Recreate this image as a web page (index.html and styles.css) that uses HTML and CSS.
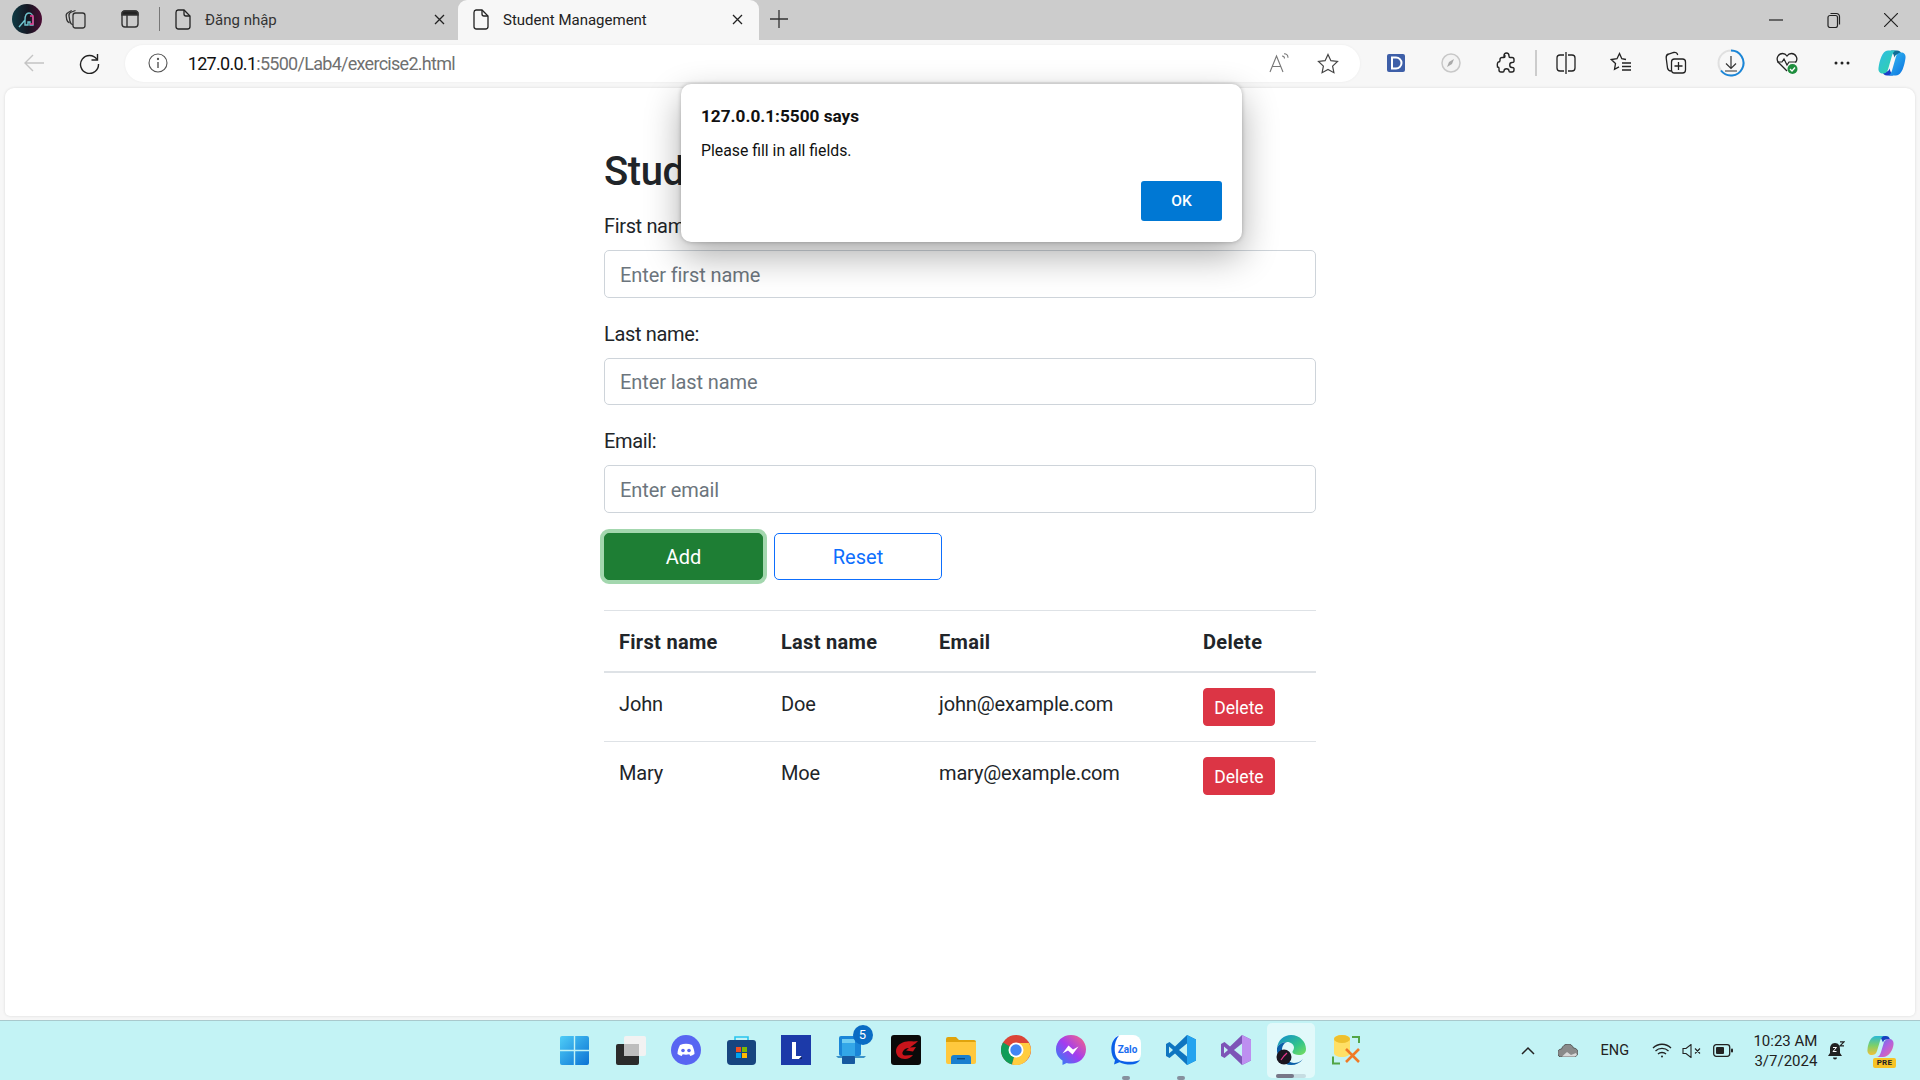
FILE: index.html
```html
<!DOCTYPE html>
<html lang="en">
<head>
<meta charset="utf-8">
<title>Student Management</title>
<link rel="stylesheet" href="styles.css">
</head>
<body>
<div class="browser">
  <header class="tabbar">
    <div class="profile">
      <svg width="30" height="30" viewBox="0 0 30 30"><defs><linearGradient id="pg" x1="0" x2="1" y1="0" y2="0"><stop offset="0" stop-color="#0e3a44"/><stop offset=".55" stop-color="#161622"/><stop offset="1" stop-color="#4c0c34"/></linearGradient></defs><circle cx="15" cy="15" r="15" fill="url(#pg)"/><path d="M7 23l6-7M13 16c0-5 2-7 4-7s4 2 4 5v7h-3v-3h-2v3h-3z" fill="none" stroke="#6fc4cf" stroke-width="1.4"/><path d="M18 12h3v8h-3" fill="none" stroke="#e8358c" stroke-width="1.4"/></svg>
    </div>
    <div class="tbtn tbtn-first">
      <svg width="22" height="22" viewBox="0 0 22 22" fill="none" stroke="#333" stroke-width="1.3"><rect x="8" y="5" width="12" height="15" rx="2.5"/><path d="M8 17c-1.5-.5-2.6-1.7-3-3.5L4 8c-.3-2 .6-3.300 2.500-4l4-1.500"/><path d="M4.500 15c-1.500-.8-2.500-2-2.800-3.500L1.200 8c-.2-1.500.5-2.800 2-3.500l3.500-2"/></svg>
    </div>
    <div class="tbtn">
      <svg width="20" height="20" viewBox="0 0 20 20" fill="none" stroke="#333" stroke-width="1.4"><rect x="2" y="2" width="16" height="16" rx="3"/><path d="M2 5a3 3 0 0 1 3-3h10a3 3 0 0 1 3 3v1H2z" fill="#222"/><path d="M7 6v12"/></svg>
    </div>
    <div class="tabsep"></div>
    <div class="tab">
      <svg class="doc" width="16" height="21" viewBox="0 0 16 21" fill="none" stroke="#222" stroke-width="1.3"><path d="M3 1h6l6 6v10.500a2.500 2.500 0 0 1-2.500 2.500h-9A2.500 2.500 0 0 1 1 17.500v-14A2.500 2.500 0 0 1 3 1z"/><path d="M9 1v4a2 2 0 0 0 2 2h4"/></svg>
      <span class="tabtitle">Đăng nhập</span>
      <svg class="tabx" width="11" height="11" viewBox="0 0 11 11" stroke="#222" stroke-width="1.3"><path d="M1 1l9 9M10 1l-9 9"/></svg>
    </div>
    <div class="tab tab-active">
      <svg class="doc" width="16" height="21" viewBox="0 0 16 21" fill="none" stroke="#222" stroke-width="1.3"><path d="M3 1h6l6 6v10.500a2.500 2.500 0 0 1-2.500 2.500h-9A2.500 2.500 0 0 1 1 17.500v-14A2.500 2.500 0 0 1 3 1z"/><path d="M9 1v4a2 2 0 0 0 2 2h4"/></svg>
      <span class="tabtitle">Student Management</span>
      <svg class="tabx" width="11" height="11" viewBox="0 0 11 11" stroke="#222" stroke-width="1.3"><path d="M1 1l9 9M10 1l-9 9"/></svg>
    </div>
    <div class="newtab">
      <svg width="18" height="18" viewBox="0 0 18 18" stroke="#333" stroke-width="1.3"><path d="M9 0v18M0 9h18"/></svg>
    </div>
    <div class="winctl">
      <div class="winbtn"><svg width="14" height="14" viewBox="0 0 14 14" stroke="#222" stroke-width="1.2"><path d="M0 7h14"/></svg></div>
      <div class="winbtn"><svg width="14" height="16" viewBox="0 0 14 16" fill="none" stroke="#222" stroke-width="1.2"><rect x="1" y="3.500" width="9.500" height="12" rx="2"/><path d="M3.500 1.500h6a3 3 0 0 1 3 3v8"/></svg></div>
      <div class="winbtn"><svg width="14" height="14" viewBox="0 0 14 14" stroke="#222" stroke-width="1.2"><path d="M0 0l14 14M14 0L0 14"/></svg></div>
    </div>
  </header>

  <nav class="toolbar">
    <div class="navbtn nav-back"><svg width="20" height="18" viewBox="0 0 20 18" fill="none" stroke="#c4c4c4" stroke-width="1.4"><path d="M1 9h19M9 1L1 9l8 8"/></svg></div>
    <div class="navbtn nav-reload"><svg width="21" height="21" viewBox="0 0 21 21" fill="none" stroke="#222" stroke-width="1.4"><path d="M18 6.500A9 9 0 1 0 19.500 11"/><path d="M18.500 1v6h-6"/></svg></div>
    <div class="addr">
      <svg class="info" width="20" height="20" viewBox="0 0 20 20" fill="none" stroke="#555" stroke-width="1.1"><circle cx="10" cy="10" r="9"/><path d="M10 9v6" stroke-width="1.4"/><circle cx="10" cy="6" r=".6" fill="#555"/></svg>
      <span class="url"><span class="url-host">127.0.0.1</span>:5500/Lab4/exercise2.html</span>
      <div class="addr-end">
        <svg width="22" height="20" viewBox="0 0 22 20" fill="none" stroke="#777" stroke-width="1.1"><path d="M1 19L7.500 3 14 19M3.500 13.500h8"/><path d="M13 3c1.500 0 2.500 1 2.500 2.500M15 .8c2.500 0 4 1.500 4 4"/></svg>
        <svg width="22" height="21" viewBox="0 0 22 21" fill="none" stroke="#444" stroke-width="1.2"><path d="M11 1.500l2.900 6.200 6.600.8-4.900 4.600 1.300 6.600L11 16.400l-5.900 3.300 1.300-6.600L1.500 8.500l6.600-.8z"/></svg>
      </div>
    </div>
    <div class="tools">
      <div class="tool"><svg width="18" height="18" viewBox="0 0 18 18"><rect width="18" height="18" rx="2" fill="#3e5fa8"/><path d="M5 3.500h4a5.500 5.500 0 0 1 0 11H5z" fill="none" stroke="#fff" stroke-width="2"/></svg></div>
      <div class="tool"><svg width="20" height="20" viewBox="0 0 20 20"><circle cx="10" cy="10" r="9" fill="#f3f3f3" stroke="#c8c8c8" stroke-width="1.5"/><path d="M6 14l2-5 5-3-2 5z" fill="#aaa"/></svg></div>
      <div class="tool"><svg width="20" height="22" viewBox="0 0 20 22" fill="none" stroke="#222" stroke-width="1.4"><path d="M8 4c0-4 5-4 5 0 0 1 0 1.500 1 1.500h2a2 2 0 0 1 2 2v2c0 1-1.500 1-2 1-3 0-3 5 0 5 .5 0 2 0 2 1v1.500a2 2 0 0 1-2 2h-2c-1 0-1-.5-1-1 0-3-5-3-5 0 0 .5 0 1-1 1H5a2 2 0 0 1-2-2v-2c0-1-1-1-1.500-1-.5-3 .1-5 1-5 .5 0 1.500-.5 1.500-1.500V7.500a2 2 0 0 1 2-2h2c1 0 1-.5 1-1.500z"/></svg></div>
      <div class="toolsep"></div>
      <div class="tool"><svg width="20" height="22" viewBox="0 0 20 22" fill="none" stroke="#222" stroke-width="1.3"><path d="M10 0v22M8 3H4a3 3 0 0 0-3 3v10a3 3 0 0 0 3 3h4M12 3h4a3 3 0 0 1 3 3v10a3 3 0 0 1-3 3h-4"/></svg></div>
      <div class="tool"><svg width="22" height="22" viewBox="0 0 22 22" fill="none" stroke="#222" stroke-width="1.3"><path d="M16 7.500l-4.200-.8L9.500 1.500 7 6.700l-5.700.8 4.200 4-1 5.800 4.500-2.400"/><path d="M12 11h9M12 14.500h9M12 18h9"/></svg></div>
      <div class="tool"><svg width="22" height="24" viewBox="0 0 22 24" fill="none" stroke="#222" stroke-width="1.3"><rect x="6.500" y="8" width="14" height="14" rx="3"/><path d="M13.500 11v8M9.500 15h8"/><path d="M6 20c-2 0-3-1-3.500-3L1.200 7c-.2-2 .6-3.500 2.500-4l5-1.500c2-.5 3.500.2 4 2.500"/></svg></div>
      <div class="tool"><svg width="28" height="28" viewBox="0 0 28 28" fill="none"><circle cx="14" cy="14" r="12.500" stroke="#e0e0e0" stroke-width="2"/><path d="M14 1.500A12.500 12.500 0 1 1 4 21.500" stroke="#1a86d8" stroke-width="2"/><path d="M14 7v12M9 14.500l5 5 5-5M8 22h12" stroke="#333" stroke-width="1.2"/></svg></div>
      <div class="tool"><svg width="24" height="24" viewBox="0 0 24 24" fill="none"><path d="M12 20L3.500 11.500C.500 8 3 2.500 7.500 2.500 9.500 2.500 11 3.500 12 5c1-1.500 2.500-2.500 4.500-2.500 4.500 0 7 5.500 4 9" stroke="#222" stroke-width="1.3"/><path d="M2 11h5l2-3 3 6 2-3h7" stroke="#222" stroke-width="1.2"/><circle cx="17.500" cy="18" r="5" fill="#1e8e3e"/><path d="M15 18l2 2 3-3.500" stroke="#fff" stroke-width="1.3"/></svg></div>
      <div class="tool"><svg width="16" height="4" viewBox="0 0 16 4" fill="#222"><circle cx="2" cy="2" r="1.500"/><circle cx="8" cy="2" r="1.500"/><circle cx="14" cy="2" r="1.500"/></svg></div>
      <div class="tool tool-copilot"><svg width="30" height="30" viewBox="0 0 30 30"><defs><linearGradient id="cp1" x1="0" x2="1" y1="0" y2="1"><stop offset="0" stop-color="#2fbce6"/><stop offset="1" stop-color="#2fd6a0"/></linearGradient><linearGradient id="cp2" x1="0" x2="1" y1="0" y2="1"><stop offset="0" stop-color="#38c4f2"/><stop offset="1" stop-color="#0a6fe0"/></linearGradient></defs><path d="M14 2.500h6c2.500 0 4 1.500 4.500 4l-4 0c-1.500 0-2.500 1-3 3l-1-3z" fill="#0f6d96"/><path d="M16 27.500h-6c-2.500 0-4-1.500-4.500-4l4 0c1.500 0 2.500-1 3-3l1 3z" fill="#1a3fc8"/><path d="M11 2.500h9c-3 0-4 2-5 5l-4 14c-1 3-3 4-5 4-3 0-5-2-4.500-5.500C2.500 13 5 2.500 11 2.500z" fill="url(#cp1)"/><path d="M19 27.500h-9c3 0 4-2 5-5l4-14c1-3 3-4 5-4 3 0 5 2 4.500 5.500C27.500 17 25 27.500 19 27.500z" fill="url(#cp2)"/></svg></div>
    </div>
  </nav>

  <main class="viewport">
    <div class="container">
      <h2 class="title">Student Management</h2>
      <form class="form">
        <div class="field"><label class="label">First name:</label><input class="input" placeholder="Enter first name"></div>
        <div class="field"><label class="label">Last name:</label><input class="input" placeholder="Enter last name"></div>
        <div class="field"><label class="label">Email:</label><input class="input" placeholder="Enter email"></div>
        <div class="actions">
          <button type="button" class="btn btn-add">Add</button>
          <button type="button" class="btn btn-reset">Reset</button>
        </div>
      </form>
      <table class="table">
        <thead>
          <tr><th class="c1">First name</th><th class="c2">Last name</th><th class="c3">Email</th><th>Delete</th></tr>
        </thead>
        <tbody>
          <tr><td>John</td><td>Doe</td><td>john@example.com</td><td class="cell-btn"><button type="button" class="btn-del">Delete</button></td></tr>
          <tr><td>Mary</td><td>Moe</td><td>mary@example.com</td><td class="cell-btn"><button type="button" class="btn-del">Delete</button></td></tr>
        </tbody>
      </table>
    </div>
    <div class="dialog">
      <div class="dialog-title">127.0.0.1:5500 says</div>
      <div class="dialog-body">Please fill in all fields.</div>
      <div class="dialog-actions"><button type="button" class="dialog-ok">OK</button></div>
    </div>
  </main>

  <footer class="taskbar">
    <div class="task-spacer"></div>
    <div class="apps">
      <div class="app app-start"><svg width="29" height="29" viewBox="0 0 29 29"><defs><linearGradient id="w1" x1="0" x2="1" y1="0" y2="1"><stop offset="0" stop-color="#4fcdf7"/><stop offset="1" stop-color="#0a72d4"/></linearGradient></defs><path d="M2 0h11.800v13.800H0V2a2 2 0 0 1 2-2zM15.200 0H27a2 2 0 0 1 2 2v11.800H15.200zM0 15.200h13.800V29H2a2 2 0 0 1-2-2zM15.200 15.200H29V27a2 2 0 0 1-2 2H15.200z" fill="url(#w1)"/></svg></div>
      <div class="app"><svg width="30" height="29" viewBox="0 0 30 29"><rect x="8" y="0" width="22" height="20" rx="2" fill="#f2f2f2"/><rect y="8" width="23" height="21" rx="2" fill="#2b2b2b"/><rect x="8" y="8" width="15" height="12" fill="#bdbdbd"/></svg></div>
      <div class="app"><svg width="30" height="30" viewBox="0 0 30 30"><circle cx="15" cy="15" r="15" fill="#5865f2"/><path d="M9 10c4-1.700 8-1.700 12 0 1.600 2.800 2.500 6 2.500 9-1.400 1-2.800 1.700-4.200 2l-1-1.700c-2 .6-4.600.6-6.600 0l-1 1.700c-1.400-.3-2.800-1-4.200-2 0-3 .9-6.200 2.500-9z" fill="#fff"/><circle cx="12" cy="15.500" r="1.800" fill="#5865f2"/><circle cx="18" cy="15.500" r="1.800" fill="#5865f2"/></svg></div>
      <div class="app"><svg width="29" height="30" viewBox="0 0 29 30"><path d="M8 5V2h13v3" fill="none" stroke="#29c5ee" stroke-width="1.600"/><path d="M0 8a3 3 0 0 1 3-3h23a3 3 0 0 1 3 3v18a4 4 0 0 1-4 4H4a4 4 0 0 1-4-4z" fill="#17457f"/><rect x="9" y="12" width="5" height="5" fill="#f25022"/><rect x="15" y="12" width="5" height="5" fill="#7fba00"/><rect x="9" y="18" width="5" height="5" fill="#00a4ef"/><rect x="15" y="18" width="5" height="5" fill="#ffb900"/></svg></div>
      <div class="app"><svg width="30" height="30" viewBox="0 0 30 30"><rect width="30" height="30" fill="#1c3aa9"/><path d="M11 7h4v14h6l-3 3h-7z" fill="#fff"/><path d="M8 24h10l3-3v3z" fill="#0f2266"/></svg></div>
      <div class="app app-badged"><svg width="30" height="28" viewBox="0 0 30 28"><rect x="3" y="0" width="22" height="20" rx="2" fill="#1a86d8"/><path d="M0 20h30l-2 2H2z" fill="#3a93c8"/><rect x="6" y="3" width="13" height="25" rx="2" fill="#33a7e8"/><rect x="6" y="20" width="13" height="8" rx="1" fill="#17599f"/><rect x="6" y="3" width="13" height="4" fill="#6fcdf2"/></svg><span class="badge">5</span></div>
      <div class="app"><svg width="30" height="30" viewBox="0 0 30 30"><rect width="30" height="30" rx="3" fill="#0a0a0a"/><path d="M27 6c-4 1-7 0-11 .5C10 7 5 11 5 16c0 5 4 8 9 8 3 0 6-1.500 8-4l-8 .5c-2 0-3-1.500-2.500-3.300C12.500 14.500 15 13 18 13l-3 2.500 7 1 3-4.500-6 .5c2-2 5-3 8-6.500z" fill="#c8141b"/></svg></div>
      <div class="app"><svg width="30" height="27" viewBox="0 0 30 27"><path d="M0 2a2 2 0 0 1 2-2h8l3 3h15a2 2 0 0 1 2 2v3H0z" fill="#e0a30c"/><path d="M0 5h30v20a2 2 0 0 1-2 2H2a2 2 0 0 1-2-2z" fill="#ffc83d"/><path d="M5 27v-6a3 3 0 0 1 3-3h14a3 3 0 0 1 3 3v6z" fill="#1a7fcf"/><rect x="11" y="21" width="8" height="1.400" fill="#0c4a80"/></svg></div>
      <div class="app"><svg width="30" height="30" viewBox="0 0 30 30"><circle cx="15" cy="15" r="15" fill="#db4437"/><path d="M15 15L2 7.500A15 15 0 0 0 11 29.500z" fill="#0f9d58"/><path d="M15 8h13a15 15 0 0 1-17 21.500L15 15z" fill="#ffcd40"/><circle cx="15" cy="15" r="7.500" fill="#fff"/><circle cx="15" cy="15" r="5.700" fill="#4285f4"/></svg></div>
      <div class="app"><svg width="30" height="30" viewBox="0 0 30 30"><defs><linearGradient id="ms" x1="0" x2="1" y1="1" y2="0"><stop offset="0" stop-color="#1c8cf6"/><stop offset=".5" stop-color="#a33cf0"/><stop offset="1" stop-color="#fb6a7c"/></linearGradient></defs><path d="M15 0c8.500 0 15 6.200 15 14.300S23.500 28.600 15 28.600c-1.500 0-3-.2-4.300-.6L6.500 30v-4.500C2.500 23 0 19 0 14.300 0 6.200 6.500 0 15 0z" fill="url(#ms)"/><path d="M6.500 18.500l6-8 4.500 4 5.500-3-6 8-4.500-4z" fill="#fff"/></svg></div>
      <div class="app app-run"><svg width="30" height="30" viewBox="0 0 30 30"><rect x="2" y="0" width="28" height="27" rx="8" fill="#fff"/><path d="M8 .5C3 2.500.3 8 .3 14c0 5 1.700 9 3.700 11l-1 4.500 5.500-2.300c3 1.500 7 2.300 11 2.300 4 0 7.500-1.500 9.700-4.500-4 2-14 2.500-20 .5-3.500-1.500-5.500-6-5.500-11.500C3.500 9 5 4 8 .5z" fill="#0a5fe8"/><text x="16.500" y="18" class="zalo-text">Zalo</text></svg></div>
      <div class="app app-run"><svg width="30" height="30" viewBox="0 0 30 30"><path d="M21 0l9 4.500v21L21 30 9 18.500 3.500 23 0 21V9l3.500-2L9 11.500z" fill="#0f75c0"/><path d="M21 0l9 4.500v21L21 30z" fill="#24a3ef"/><path d="M21 8.500L13 15l8 6.500z" fill="#c3f3f5"/><path d="M3 11.500L7 15l-4 3.500z" fill="#c3f3f5"/></svg></div>
      <div class="app"><svg width="30" height="30" viewBox="0 0 30 30"><path d="M21 0l9 4.500v21L21 30 9 18.500 3.500 23 0 21V9l3.500-2L9 11.500z" fill="#7d55b7"/><path d="M21 0l9 4.500v21L21 30z" fill="#bd8ff0"/><path d="M21 8.500L13 15l8 6.500z" fill="#c3f3f5"/><path d="M3 11.500L7 15l-4 3.500z" fill="#c3f3f5"/></svg></div>
      <div class="app app-active"><svg width="30" height="30" viewBox="0 0 30 30"><defs><linearGradient id="ed" x1="0" x2="1" y1="0" y2="1"><stop offset="0" stop-color="#0f8ad4"/><stop offset=".6" stop-color="#33c48a"/><stop offset="1" stop-color="#7adf5c"/></linearGradient></defs><path d="M1 13C2 5 8 0 15 0c9 0 15 7 15 14 0 4-3 6-7 6-3 0-6-1-6.500-2.500C16 16 18 15 18 12.500 18 9.500 15 7 11 7 6 7 2 10 1 13z" fill="url(#ed)"/><path d="M1 13c1-3 5-6 10-6-3 1-5 4-5 8 0 6 5 12 12 13 3 0 6-1 9-4-3 4-7 6-12 6C7 30 0 22 1 13z" fill="#0b5fa8"/><circle cx="8" cy="22" r="7.500" fill="#1a1620"/><path d="M5 25l3-4 3-3" stroke="#e8358c" stroke-width="1.200" fill="none"/></svg><span class="run-track"><span class="run-fill"></span></span></div>
      <div class="app"><svg width="28" height="30" viewBox="0 0 28 30"><path d="M2 4c0-2 3-4 8-4s8 2 8 4v14c0 2-3 4-8 4s-8-2-8-4z" fill="#ffe066"/><ellipse cx="10" cy="4" rx="8" ry="4" fill="#eec02e"/><path d="M20 2h7v6M8 28.500H1v-7" fill="none" stroke="#52a547" stroke-width="2"/><path d="M14 14l13 13M27 14L14 27" stroke="#f07a26" stroke-width="2.600"/></svg></div>
    </div>
    <div class="tray">
      <svg class="tray-up" width="14" height="9" viewBox="0 0 14 9" fill="none" stroke="#222" stroke-width="1.500"><path d="M1 8l6-6 6 6"/></svg>
      <svg class="tray-cloud" width="20" height="13" viewBox="0 0 20 13"><path d="M4 13a4 4 0 0 1-.5-8C4.500 2 7 0 10 0c2.500 0 4.500 1.500 5.500 4a4.500 4.500 0 0 1 0 9z" fill="#8a8a8a" stroke="#444" stroke-width=".8"/><path d="M4 12.500l5-4.500 4 3 5-2 1 2-2 1.500z" fill="#d8d8d8"/></svg>
      <span class="tray-lang">ENG</span>
      <svg class="tray-wifi" width="20" height="15" viewBox="0 0 20 15" fill="none" stroke="#222" stroke-width="1.300"><path d="M1 5c5-5 13-5 18 0M3.500 8c3.500-3.500 9.500-3.500 13 0M6 11c2-2 6-2 8 0"/><circle cx="10" cy="13.500" r="1" fill="#222" stroke="none"/></svg>
      <svg class="tray-vol" width="20" height="14" viewBox="0 0 20 14" fill="none" stroke="#222" stroke-width="1.100"><path d="M1 4.500v5h3l5 4V.5l-5 4zM13 4.500l5 5M18 4.500l-5 5"/></svg>
      <svg class="tray-bat" width="20" height="13" viewBox="0 0 20 13"><rect x=".7" y=".7" width="16" height="11.600" rx="2.500" fill="none" stroke="#222" stroke-width="1.300"/><rect x="3" y="3" width="8" height="7" rx="1" fill="#222"/><rect x="18" y="4.500" width="2" height="4" rx="1" fill="#222"/></svg>
      <div class="clock"><span>10:23 AM</span><span>3/7/2024</span></div>
      <svg class="tray-bell" width="17" height="20" viewBox="0 0 17 20"><path d="M7 2C3.500 2 2 5 2 8v4l-2 3h14l-2-3V8c0-3-1.500-6-5-6zM5 16.500a2 2 0 0 0 4 0z" fill="#222"/><path d="M5 6.500h3.500L5 10.500h3.500" fill="none" stroke="#fff" stroke-width="1"/><path d="M12 .8h4l-4 4h4" fill="none" stroke="#222" stroke-width="1.200"/></svg>
      <div class="tray-copilot"><svg width="30" height="28" viewBox="0 0 30 28"><defs><linearGradient id="cq" x1="0" x2="0" y1="0" y2="1"><stop offset="0" stop-color="#2ab9d6"/><stop offset=".5" stop-color="#7bd06a"/><stop offset="1" stop-color="#f2c038"/></linearGradient><linearGradient id="cr" x1="0" x2="1" y1="0" y2="1"><stop offset="0" stop-color="#3c7df0"/><stop offset=".5" stop-color="#b060e0"/><stop offset="1" stop-color="#f06a9a"/></linearGradient></defs><path d="M14 1h6c2 0 3.500 1 4 3.500h-4c-1.500 0-2.500 1-3 3z" fill="#1640c0"/><path d="M10 1h9c-3 0-4 2-5 5l-3 10c-1 3-3 4-5 4-3 0-5-2-4.500-5.500C2 8 5 1 10 1z" fill="url(#cq)"/><path d="M17 22h-7c3 0 4-2 5-5l3-10c1-2 3-3 5-3 3 0 5 2 4.500 5.500C27 15 23 22 17 22z" fill="url(#cr)"/></svg><span class="pre">PRE</span></div>
    </div>
  </footer>
</div>
</body>
</html>
```
FILE: styles.css
```css
* { box-sizing: border-box; }
html, body { margin: 0; height: 100%; }
body { font-family: Roboto, "Noto Sans", sans-serif; color: #212529; overflow: hidden; }
svg { display: block; flex: none; }

.browser { width: 1920px; height: 1080px; display: flex; flex-direction: column; background: #f7f7f7; }

/* tab strip */
.tabbar { height: 40px; flex: none; display: flex; align-items: center; background: #cccccc; padding-left: 12px; }
.profile { width: 30px; height: 30px; margin-top: -2px; }
.tbtn { width: 54px; display: flex; justify-content: center; margin-top: -2px; }
.tbtn-first { margin-left: 7px; }
.tabsep { width: 1px; height: 24px; margin: -2px 6px 0 2px; background: #777; }
.tab { width: 287px; height: 40px; display: flex; align-items: center; padding: 0 8px 1px 9px; font-size: 15px; color: #333; }
.tab-active { width: 301px; margin-left: 5px; padding: 0 16px 1px 15px; background: #f7f7f7; border-radius: 9px 9px 0 0; color: #222; }
.doc { margin-right: 14px; }
.tabtitle { flex: 1; white-space: nowrap; }
.newtab { margin: -3px 0 0 11px; }
.winctl { margin-left: auto; display: flex; }
.winbtn { width: 57.500px; height: 40px; display: flex; align-items: center; justify-content: center; }

/* toolbar */
.toolbar { height: 48px; flex: none; display: flex; align-items: center; padding-bottom: 2px; }
.navbtn { display: flex; justify-content: center; }
.nav-back { width: 68px; }
.nav-reload { width: 44px; }
.addr { width: 1237px; height: 37px; margin-left: 13px; background: #fff; border-radius: 19px; display: flex; align-items: center; padding: 0 21px 0 23px; box-shadow: 0 0 3px rgba(0,0,0,.05); }
.info { margin-right: 20px; }
.url { font-size: 18px; letter-spacing: -.72px; color: #707070; }
.url-host { color: #111; }
.addr-end { margin-left: auto; display: flex; align-items: center; gap: 26px; }
.tools { display: flex; align-items: center; margin-left: 8px; }
.tool { width: 55.300px; display: flex; justify-content: center; }
.tool-copilot { margin-left: -5px; }
.toolsep { width: 2px; height: 26px; background: #ccc; margin: 0 1px; }

/* page */
.viewport { position: relative; flex: none; height: 928px; margin: 0 5px 4px; background: #fff; border-radius: 9px 9px 5px 5px; box-shadow: 0 0 3px rgba(0,0,0,.12); }
.container { width: 712px; margin: 0 auto; padding-top: 60px; }
.title { margin: 0 0 14px; font-size: 40px; line-height: 48px; font-weight: 500; letter-spacing: -.4px; white-space: nowrap; }
.field { margin-bottom: 20px; }
.label { display: block; font-size: 20px; line-height: 30px; padding-top: 1px; margin-bottom: 9px; height: 31px; letter-spacing: -.35px; }
.input { display: block; width: 100%; height: 47.500px; padding: 2px 15px 0; font: 20px Roboto, sans-serif; letter-spacing: -.1px; color: #212529; background: #fff; border: 1px solid #ced4da; border-radius: 5px; }
.input::placeholder { color: #6c757d; opacity: 1; }
.actions { display: flex; gap: 10px; }
.btn { height: 47.500px; padding: 2px 0 0; font: 20px Roboto, sans-serif; border-radius: 5px; border: 1px solid transparent; }
.btn-add { width: 159px; color: #fff; background: #1e7e34; border-color: #1e7e34; box-shadow: 0 0 0 4px #a3d7ae; }
.btn-reset { width: 168px; margin-left: 1px; color: #0d6efd; background: #fff; border-color: #0d6efd; }
.table { width: 100%; margin-top: 30px; border-collapse: collapse; table-layout: fixed; font-size: 20px; line-height: 30px; letter-spacing: -.15px; }
.table th { text-align: left; font-weight: 700; padding: 16px 15px 14px; letter-spacing: .3px; border-top: 1px solid #dee2e6; border-bottom: 2px solid #dee2e6; }
.table td { padding: 16px 15px 14px; vertical-align: top; border-bottom: 1px solid #dee2e6; }
.table td.cell-btn { padding: 15px; }
.table tbody tr:last-child td { border-bottom: 0; }
.c1 { width: 162px; }
.c2 { width: 158px; }
.c3 { width: 264px; }
.btn-del { display: block; width: 72px; height: 38px; padding: 1px 0 0; font: 17.500px Roboto, sans-serif; color: #fff; background: #dc3545; border: 1px solid #dc3545; border-radius: 4px; }

/* alert */
.dialog { position: absolute; left: 676px; top: -4px; width: 561px; height: 158px; padding: 19px 20px 0; background: #fff; border-radius: 10px; box-shadow: 0 14px 36px rgba(0,0,0,.32), 0 0 4px rgba(0,0,0,.25); display: flex; flex-direction: column; }
.dialog-title { font-size: 17.200px; line-height: 26px; font-weight: 700; color: #111; }
.dialog-body { margin-top: 11px; font-size: 15.800px; line-height: 22px; color: #111; }
.dialog-actions { margin-top: auto; padding-bottom: 21px; display: flex; justify-content: flex-end; }
.dialog-ok { width: 81px; height: 40px; padding: 0; font: 500 15.500px Roboto, sans-serif; color: #fff; background: #0078d4; border: 0; border-radius: 3px; }

/* taskbar */
.taskbar { height: 60px; flex: none; display: grid; grid-template-columns: 1fr auto 1fr; align-items: center; background: #c3f3f5; border-top: 1px solid #a9c9cd; }
.apps { display: flex; padding-left: 2px; }
.app { position: relative; width: 55px; height: 55px; margin-top: -1px; display: flex; align-items: center; justify-content: center; border-radius: 5px; }
.app-start { padding-right: 3px; }
.app-badged .badge { position: absolute; top: 2px; left: 29px; width: 20px; height: 20px; border-radius: 50%; background: #0a6cc4; color: #fff; font-size: 13px; line-height: 20px; text-align: center; }
.app-run::after { content: ""; position: absolute; left: 50%; bottom: -2px; width: 8px; height: 4px; margin-left: -4px; border-radius: 2px; background: #778; opacity: .8; }
.app-active { background: rgba(255,255,255,.5); width: 48px; margin: -1px 3.500px 0; }
.run-track { position: absolute; left: 9px; bottom: 0; width: 30px; height: 4px; border-radius: 2px; background: #c6dde2; }
.run-fill { display: block; width: 18px; height: 4px; border-radius: 2px; background: #778; }
.zalo-text { font: 700 10px Roboto, sans-serif; fill: #1a6df0; text-anchor: middle; }
.tray { justify-self: end; display: flex; align-items: center; height: 100%; padding-right: 24px; }
.tray-up { margin-right: 23px; }
.tray-cloud { margin-right: 22.600px; }
.tray-lang { font-size: 14.500px; margin-right: 23.400px; color: #222; }
.tray-wifi { margin-right: 10px; }
.tray-vol { margin-right: 11px; }
.tray-bat { margin-right: 20px; }
.clock { display: flex; flex-direction: column; align-items: flex-end; font-size: 15px; line-height: 20px; color: #222; margin-right: 10.300px; }
.tray-bell { margin-right: 21.300px; }
.tray-copilot { position: relative; margin-top: -3px; }
.pre { position: absolute; left: 7px; bottom: -5px; width: 23px; height: 10px; background: #f7c325; border-radius: 2px; font: 700 8px/10px Roboto, sans-serif; letter-spacing: .3px; text-align: center; color: #222; }
```
